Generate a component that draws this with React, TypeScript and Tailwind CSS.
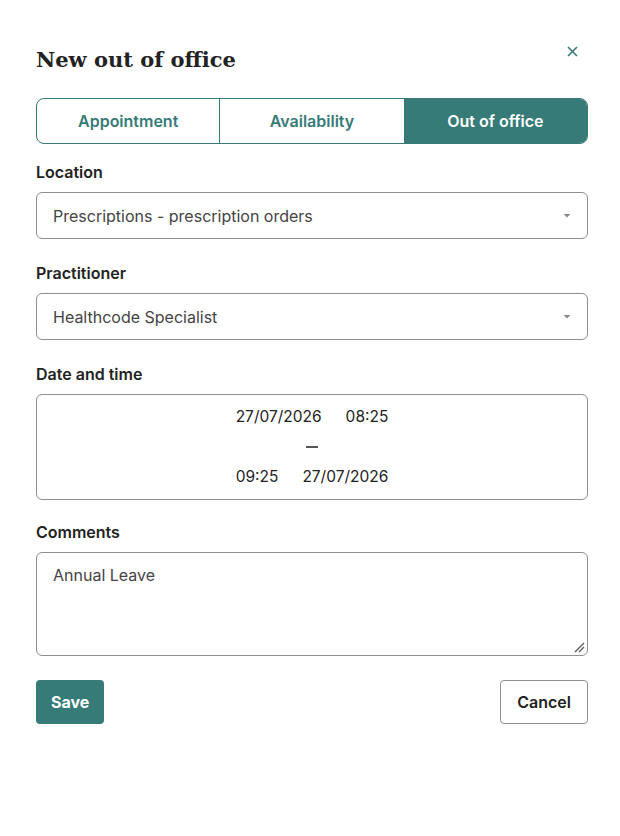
import React from "react";

const teal = "#367b78";

function Caret() {
  return (
    <svg width="10" height="6" viewBox="0 0 10 6" className="shrink-0">
      <path d="M1.5 1h7L5 4.5z" fill="#8a8a8a" />
    </svg>
  );
}

function Field({
  label,
  className = "",
  children,
}: {
  label: string;
  className?: string;
  children: React.ReactNode;
}) {
  return (
    <div className={`flex flex-col gap-[10px] ${className}`}>
      <label className="text-[16px] font-semibold leading-[19px] text-[#222]">{label}</label>
      {children}
    </div>
  );
}

function Select({ value }: { value: string }) {
  return (
    <div className="flex h-[47px] items-center justify-between rounded-[6px] border border-[#8f8f8f] pl-[16px] pr-[15px] text-[16px] text-[#444]">
      <span>{value}</span>
      <Caret />
    </div>
  );
}

export default function App() {
  return (
    <div
      className="min-h-[836px] w-[620px] bg-white pl-[36px] pr-[32px] pt-[40px]"
      style={{ fontFamily: "Inter, 'Noto Sans', sans-serif" }}
    >
      <div className="flex items-start justify-between">
        <h1
          className="text-[21px] font-bold leading-[40px] text-[#222]"
          style={{ fontFamily: "'DejaVu Serif', 'Liberation Serif', serif" }}
        >
          New out of office
        </h1>
        <button className="mr-[10px] mt-[6px] text-[#367b78]" aria-label="Close">
          <svg width="11" height="11" viewBox="0 0 11 11">
            <path d="M1 1l9 9M10 1l-9 9" stroke={teal} strokeWidth="1.6" />
          </svg>
        </button>
      </div>

      <div className="mt-[18px] grid h-[46px] grid-cols-3 overflow-hidden rounded-[8px] border border-[#367b78] text-[16px] font-semibold">
        <div className="flex items-center justify-center border-r border-[#367b78] text-[#367b78]">Appointment</div>
        <div className="flex items-center justify-center text-[#367b78]">Availability</div>
        <div className="flex items-center justify-center bg-[#367b78] text-white">Out of office</div>
      </div>

      <div className="mt-[19px] flex flex-col gap-[25px]">
        <Field label="Location">
          <Select value="Prescriptions - prescription orders" />
        </Field>
        <Field label="Practitioner">
          <Select value="Healthcode Specialist" />
        </Field>
        <Field label="Date and time">
          <div className="flex h-[106px] flex-col items-center justify-center rounded-[6px] border border-[#8f8f8f] text-[15.5px] text-[#222]">
            <div className="flex h-[30px] items-center gap-[24px]">
              <span>27/07/2026</span>
              <span>08:25</span>
            </div>
            <div className="flex h-[30px] items-center">
              <div className="h-[1.5px] w-[12px] bg-[#555]" />
            </div>
            <div className="flex h-[30px] items-center gap-[24px]">
              <span>09:25</span>
              <span>27/07/2026</span>
            </div>
          </div>
        </Field>
        <Field label="Comments" className="-mt-[2px]">
          <div className="relative h-[104px] rounded-[6px] border border-[#8f8f8f] px-[16px] pt-[11px] text-[16px] leading-[22px] text-[#444]">
            Annual Leave
            <svg width="12" height="12" viewBox="0 0 12 12" className="absolute bottom-[2px] right-[2px]">
              <path d="M11 2L2 11M11 6L6 11" stroke="#555" strokeWidth="1.2" />
            </svg>
          </div>
        </Field>
      </div>

      <div className="mt-[24px] flex items-center justify-between">
        <button className="h-[44px] rounded-[4px] bg-[#367b78] px-[15px] text-[16px] font-bold text-white">Save</button>
        <button className="h-[44px] rounded-[4px] border border-[#8f8f8f] px-[16px] text-[16px] font-semibold text-[#222]">Cancel</button>
      </div>
    </div>
  );
}
